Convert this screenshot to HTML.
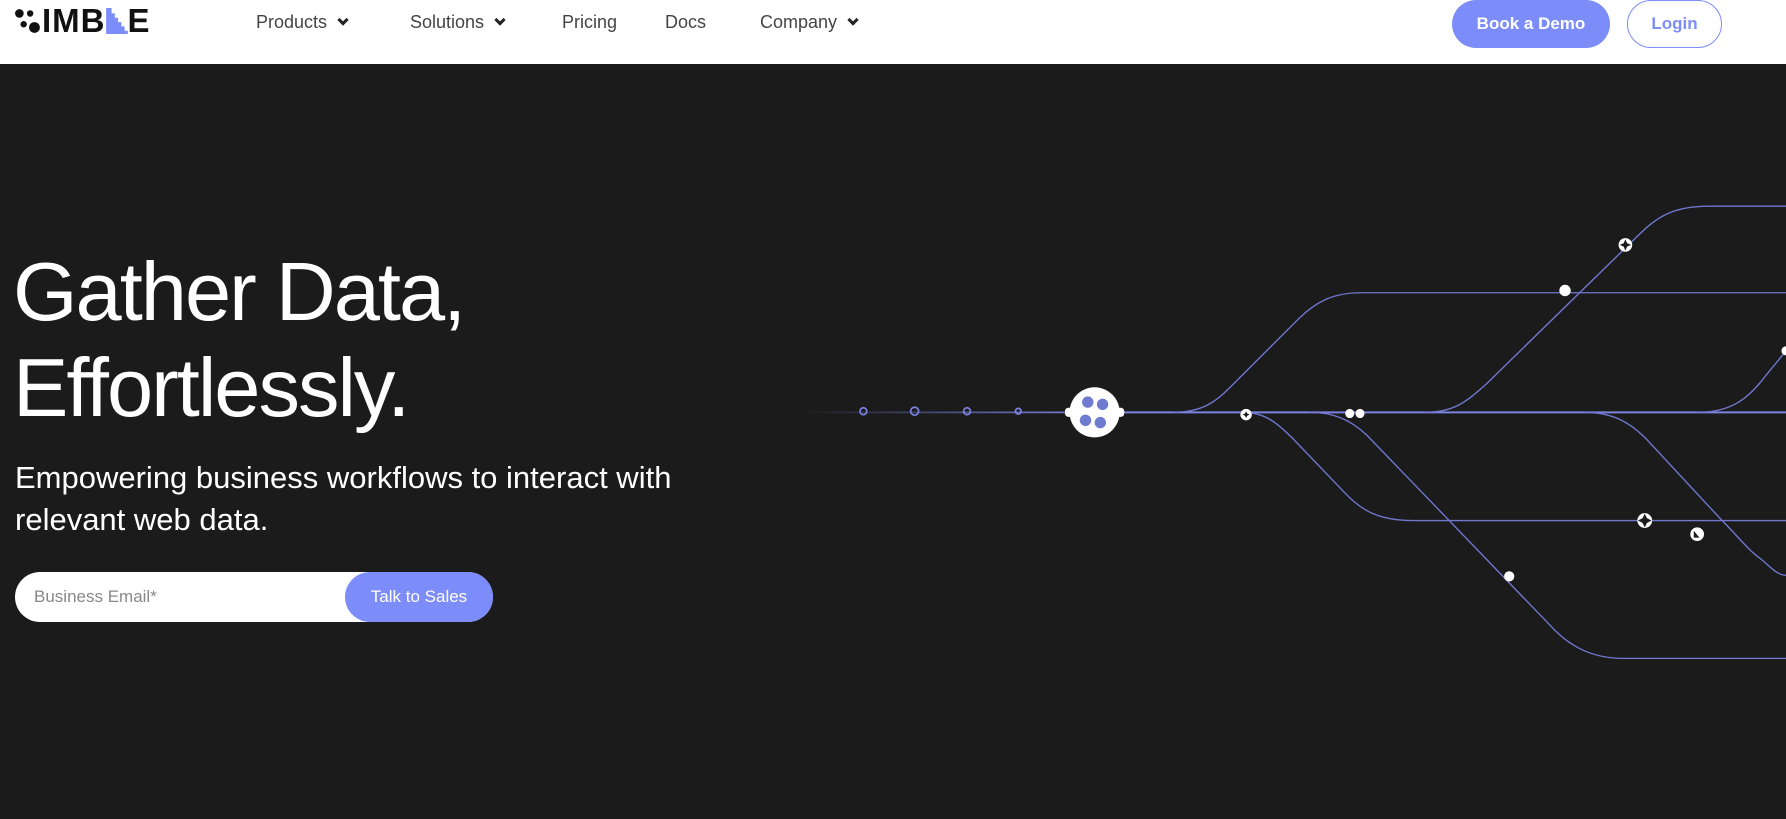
<!DOCTYPE html>
<html><head><meta charset="utf-8"><style>
*{margin:0;padding:0;box-sizing:border-box}
body{width:1786px;height:819px;overflow:hidden;background:#1b1b1b;font-family:"Liberation Sans",sans-serif;position:relative}
.hdr{position:absolute;left:0;top:0;width:1786px;height:64px;background:#fff}
.logo{position:absolute;left:14px;top:7px;font-weight:bold;font-size:33px;letter-spacing:1px;color:#111;display:flex;align-items:center;height:28px}
.nav{position:absolute;top:12px;font-size:18px;color:#444}
.chev{display:inline-block;width:8px;height:8px;border-right:3px solid #222;border-bottom:3px solid #222;transform:rotate(45deg);margin-left:12px;position:relative;top:-4px}
.demo{position:absolute;left:1452px;top:0;width:158px;height:48px;border-radius:24px;background:#7c8cf8;color:#fff;font-size:17px;font-weight:bold;text-align:center;line-height:48px}
.login{position:absolute;left:1627px;top:0;width:95px;height:48px;border-radius:24px;border:1px solid #7c8cf8;color:#7c8cf8;font-size:17px;font-weight:bold;text-align:center;line-height:46px}
h1{position:absolute;left:13px;top:244px;color:#fff;font-weight:normal;font-size:83px;line-height:96px;letter-spacing:-2px}
.sub{position:absolute;left:15px;top:457px;color:#fff;font-size:31px;line-height:42px}
.form{position:absolute;left:15px;top:572px;width:478px;height:50px;border-radius:25px;background:#fff}
.form span{position:absolute;left:19px;top:15px;color:#888;font-size:17px}
.btn{position:absolute;right:0;top:0;width:148px;height:50px;border-radius:25px;background:#7c8cf8;color:#fff;font-size:17px;text-align:center;line-height:50px}
svg{position:absolute;left:0;top:0}
</style></head><body>
<div class="hdr">
 <div class="logo"><svg style="position:static" width="28" height="26" viewBox="0 0 26 24"><circle cx="5" cy="5" r="4" fill="#111"/><circle cx="15" cy="5" r="3" fill="#111"/><circle cx="9" cy="15" r="3" fill="#111"/><circle cx="19" cy="18" r="5" fill="#111"/></svg><span>IMB</span><svg style="position:static" width="22" height="26" viewBox="0 0 20 24"><path d="M0 0h5v5h3v4h3v4h3v4h3v4h3v3H0z" fill="#7c8cf8"/></svg><span>E</span></div>
 <div class="nav" style="left:256px">Products<i class="chev"></i></div>
 <div class="nav" style="left:410px">Solutions<i class="chev"></i></div>
 <div class="nav" style="left:562px">Pricing</div>
 <div class="nav" style="left:665px">Docs</div>
 <div class="nav" style="left:760px">Company<i class="chev"></i></div>
 <div class="demo">Book a Demo</div>
 <div class="login">Login</div>
</div>
<h1>Gather Data,<br>Effortlessly.</h1>
<div class="sub">Empowering business workflows to interact with<br>relevant web data.</div>
<div class="form"><span>Business Email*</span><div class="btn">Talk to Sales</div></div>
<svg width="1786" height="819" viewBox="0 0 1568 719">
<defs><linearGradient id="g" x1="705" x2="960" gradientUnits="userSpaceOnUse"><stop offset="0" stop-color="#7b83e0" stop-opacity="0"/><stop offset="1" stop-color="#7b83e0"/></linearGradient></defs>
<g fill="none" stroke="#7078d0" stroke-width="1.2">
<path d="M705 362H960" stroke="url(#g)" stroke-width="1.5"/>
<path d="M960 362H1568" stroke="#7b83e0" stroke-width="1.8"/>
<path d="M1030 362C1060 362 1070 350 1090 330L1140 280C1155 265 1170 257 1195 257H1568"/>
<path d="M1250 362C1275 362 1285 355 1305 337L1440 205C1455 190 1470 181 1500 181H1568"/>
<path d="M1490 362C1520 362 1535 350 1550 330L1568 308"/>
<path d="M1090 362C1110 362 1120 370 1135 385L1180 432C1195 448 1210 457 1240 457H1568"/>
<path d="M1150 362C1170 362 1185 368 1200 382L1360 548C1375 565 1395 578 1425 578H1568"/>
<path d="M1390 362C1415 362 1430 370 1445 385L1510 455C1525 470 1535 483 1545 490C1555 498 1560 505 1568 505"/>
</g>
<g fill="none" stroke="#7b83e0" stroke-width="1.5"><circle cx="758" cy="361" r="3"/><circle cx="803" cy="361" r="3.5"/><circle cx="849" cy="361" r="3"/><circle cx="894" cy="361" r="2.5"/></g>
<g fill="#fff"><circle cx="1094" cy="364" r="5"/><circle cx="1185" cy="363" r="4"/><circle cx="1194" cy="363" r="4"/><circle cx="1427" cy="215" r="6"/><circle cx="1374" cy="255" r="5"/><circle cx="1444" cy="457" r="6.5"/><circle cx="1490" cy="469" r="6"/><circle cx="1325" cy="506" r="4.5"/><circle cx="1568" cy="308" r="4"/></g>
<g fill="#1b1b1b"><path d="M1427 210l1.5 3.5 3.5 1.5-3.5 1.5-1.5 3.5-1.5-3.5-3.5-1.5 3.5-1.5z"/><path d="M1444 451l2 4 4 2-4 2-2 4-2-4-4-2 4-2z"/><path d="M1094 361l1 2 2 1-2 1-1 2-1-2-2-1 2-1z"/><path d="M1487 466l5 6h-5z"/></g>
<circle cx="961" cy="362" r="22" fill="#fff"/><rect x="935" y="358" width="52" height="8" rx="3" fill="#fff"/>
<g fill="#6f7bd0"><circle cx="955" cy="353" r="5"/><circle cx="968" cy="355" r="5"/><circle cx="953" cy="369" r="5"/><circle cx="966" cy="371" r="5"/></g>
</svg>
</body></html>
